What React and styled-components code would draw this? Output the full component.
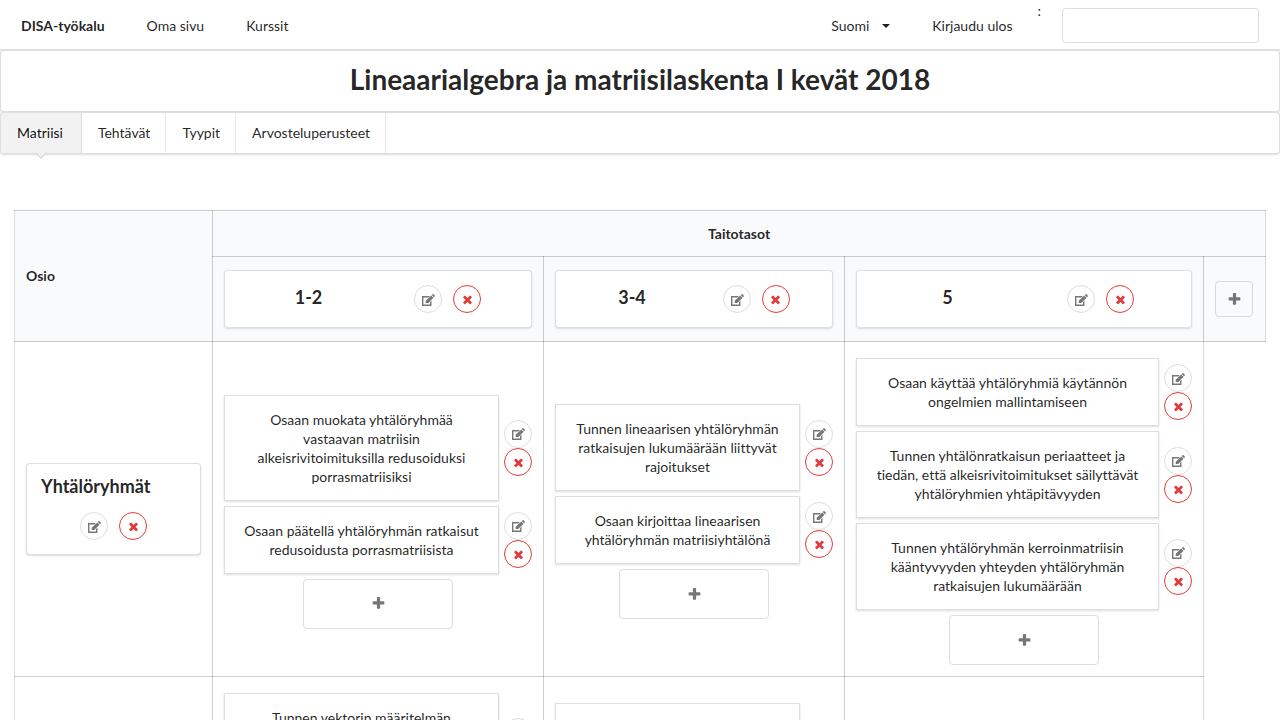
import React from 'react';
import styled, { createGlobalStyle, css } from 'styled-components';

const GlobalStyle = createGlobalStyle`
  *, *::before, *::after { box-sizing: border-box; }
  body {
    margin: 0;
    background: #fff;
    color: rgba(0, 0, 0, 0.87);
    font-family: Lato, 'Liberation Sans', sans-serif;
    font-size: 14px;
    line-height: 18px;
    font-variant-ligatures: none;
  }
  button, input, select { font: inherit; color: inherit; }
`;

const line = 'rgba(34, 36, 38, 0.15)';
const gridLine = 'rgba(34, 36, 38, 0.22)';

const raised = css`
  background: #fff;
  border: 1px solid ${line};
  box-shadow: 0 1px 2px 0 ${line};
`;

const NavBar = styled.nav`
  display: flex;
  height: 50px;
  padding: 0 21px;
  gap: 42px;
  align-items: center;
  border-bottom: 1px solid ${line};
  box-shadow: 0 1px 2px 0 ${line};
`;

const NavLink = styled.a`
  color: inherit;
  text-decoration: none;
  padding-top: 3px;
  font-weight: ${(p) => (p.$brand ? 700 : 400)};
`;

const NavRight = styled.div`
  display: flex;
  align-items: center;
  align-self: stretch;
  gap: 42px;
  margin-left: auto;
`;

const LanguagePicker = styled.label`
  display: grid;
  align-items: center;
  padding-top: 3px;
  > * { grid-area: 1 / 1; }
  svg { justify-self: end; pointer-events: none; }
`;

const LanguageSelect = styled.select`
  appearance: none;
  width: 59px;
  padding: 0;
  border: 0;
  background: transparent;
`;

const UserField = styled.label`
  display: flex;
  align-items: center;
  align-self: stretch;
  gap: 21px;
  margin-left: -17px;
`;

const UserMark = styled.span`
  align-self: flex-start;
  padding-top: 2px;
`;

const UserInput = styled.input`
  width: 197px;
  height: 35px;
  margin-top: 1px;
  padding: 0 14px;
  border: 1px solid ${line};
  border-radius: 4px;
  background: #fff;
`;

const TitlePanel = styled.header`
  ${raised}
  border-radius: 4px;
  padding: 10px 14px 14px;
  text-align: center;
`;

const CourseTitle = styled.h1`
  margin: 0;
  font-size: 28px;
  line-height: 36px;
  font-weight: 700;
`;

const TabBar = styled.nav`
  ${raised}
  display: flex;
  border-radius: 4px;
`;

const Tab = styled.a`
  position: relative;
  padding: 11px 15px 11px 16px;
  color: rgba(0, 0, 0, 0.87);
  text-decoration: none;
  border-right: 1px solid rgba(34, 36, 38, 0.1);
  ${(p) => p.$active && css`
    padding-right: 18px;
    background: #f2f2f2;
    border-radius: 3px 0 0 3px;
    color: rgba(0, 0, 0, 0.95);
    &::after {
      content: '';
      position: absolute;
      left: 50%;
      top: 100%;
      width: 8px;
      height: 8px;
      background: #f2f2f2;
      border: solid #d4d4d5;
      border-width: 0 1px 1px 0;
      transform: translate(-50%, -50%) rotate(45deg);
    }
  `}
`;

const Content = styled.main`
  padding: 56px 14px 14px;
`;

const Matrix = styled.table`
  width: 100%;
  table-layout: fixed;
  border-collapse: collapse;
`;

const cellLines = css`
  border: 1px solid ${gridLine};
  &:first-child { border-left-color: ${line}; }
  &:last-child { border-right-color: ${line}; }
`;

const HeadCell = styled.th`
  ${cellLines}
  padding: 13px 11px;
  background: #f9fafb;
  font-weight: 700;
  text-align: ${(p) => p.$align || 'center'};
`;

const SpanHeadCell = styled(HeadCell)`
  padding: 14px 11px 13px;
`;

const BodyCell = styled.td`
  ${cellLines}
  padding: 11px;
  vertical-align: middle;
`;

const LevelCard = styled.div`
  ${raised}
  display: grid;
  grid-template-columns: 1fr 1fr;
  justify-items: center;
  padding: 14px;
  border-radius: 4px;
`;

const CardTitle = styled.h3`
  margin: 0;
  font-size: 18px;
  line-height: 24px;
  font-weight: 700;
`;

const Actions = styled.div`
  display: flex;
  justify-content: center;
  flex-direction: ${(p) => (p.$stacked ? 'column' : 'row')};
  gap: ${(p) => (p.$stacked ? 0 : 11)}px;
`;

const SectionCard = styled.div`
  ${raised}
  display: flex;
  flex-direction: column;
  gap: 14px;
  padding: 10px 14px 14px;
  border-radius: 4px;
  text-align: left;
`;

const RoundButton = styled.button`
  display: flex;
  align-items: center;
  justify-content: center;
  flex: none;
  width: 28px;
  height: 28px;
  padding: 1px 0 0;
  border: 1px solid ${(p) => (p.$danger ? '#e03c3c' : line)};
  border-radius: 50%;
  background: transparent;
  color: ${(p) => (p.$danger ? '#e03c3c' : '#767676')};
  cursor: pointer;
`;

const AddButton = styled.button`
  display: flex;
  align-items: center;
  justify-content: center;
  width: ${(p) => (p.$wide ? 150 : 38)}px;
  height: ${(p) => (p.$wide ? 50 : 36)}px;
  margin: ${(p) => (p.$wide ? '5px auto 0' : '0')};
  padding: 0;
  border: 1px solid ${line};
  border-radius: 4px;
  background: transparent;
  color: #767676;
  cursor: pointer;
`;

const GoalRow = styled.div`
  display: flex;
  align-items: center;
  gap: 5px;
  margin-top: 5px;
`;

const GoalCard = styled.div`
  ${raised}
  flex: 1;
  padding: 14px;
  line-height: 19px;
  text-align: center;
`;

const Glyph = ({ size, d }) => (
  <svg width={size} height={size} viewBox="0 0 1792 1792" fill="currentColor" aria-hidden="true">
    <path d={d} />
  </svg>
);

const PLUS = 'M1600 736v192q0 40-28 68t-68 28h-416v416q0 40-28 68t-68 28h-192q-40 0-68-28t-28-68v-416h-416q-40 0-68-28t-28-68v-192q0-40 28-68t68-28h416v-416q0-40 28-68t68-28h192q40 0 68 28t28 68v416h416q40 0 68 28t28 68z';
const CROSS = 'M1490 1322q0 40-28 68l-136 136q-28 28-68 28t-68-28l-294-294-294 294q-28 28-68 28t-68-28l-136-136q-28-28-28-68t28-68l294-294-294-294q-28-28-28-68t28-68l136-136q28-28 68-28t68 28l294 294 294-294q28-28 68-28t68 28l136 136q28 28 28 68t-28 68l-294 294 294 294q28 28 28 68z';
const EDIT = 'M128 384h1000l-180 180H308v904h852v-330l180-180v690H128zM1312 320l288 288-672 672H600V992zm444 132l-92 92-288-288 92-92q28-28 68-28t68 28l152 152q28 28 28 68t-28 68z';

const EditDelete = ({ stacked }) => (
  <Actions $stacked={stacked}>
    <RoundButton type="button" aria-label="Muokkaa"><Glyph size={14} d={EDIT} /></RoundButton>
    <RoundButton type="button" aria-label="Poista" $danger><Glyph size={13} d={CROSS} /></RoundButton>
  </Actions>
);

const levels = ['1-2', '3-4', '5'];

const sections = [
  {
    name: 'Yhtälöryhmät',
    goals: [
      [
        'Osaan muokata yhtälöryhmää vastaavan matriisin alkeisrivitoimituksilla redusoiduksi porrasmatriisiksi',
        'Osaan päätellä yhtälöryhmän ratkaisut redusoidusta porrasmatriisista',
      ],
      [
        'Tunnen lineaarisen yhtälöryhmän ratkaisujen lukumäärään liittyvät rajoitukset',
        'Osaan kirjoittaa lineaarisen yhtälöryhmän matriisiyhtälönä',
      ],
      [
        'Osaan käyttää yhtälöryhmiä käytännön ongelmien mallintamiseen',
        'Tunnen yhtälönratkaisun periaatteet ja tiedän, että alkeisrivitoimitukset säilyttävät yhtälöryhmien yhtäpitävyyden',
        'Tunnen yhtälöryhmän kerroinmatriisin kääntyvyyden yhteyden yhtälöryhmän ratkaisujen lukumäärään',
      ],
    ],
  },
  {
    name: 'Vektorit',
    goals: [
      [
        'Tunnen vektorin määritelmän avaruudessa ja osaan laskea vektoreiden summan, erotuksen ja pistetulon sekä vektorin pituuden',
        'Osaan päätellä, ovatko kaksi vektoria yhdensuuntaiset tai kohtisuorassa toisiaan vastaan',
      ],
      [
        'Osaan muodostaa suoran ja tason vektorimuotoisen yhtälön sekä tulkita yhtälön ratkaisut geometrisesti avaruudessa',
        'Osaan laskea vektorin projektion toiselle vektorille',
      ],
      ['Osaan käyttää vektoreita geometristen ongelmien ratkaisemiseen'],
    ],
  },
];

export default function App() {
  return (
    <>
      <GlobalStyle />
      <NavBar>
        <NavLink href="#" $brand>DISA-työkalu</NavLink>
        <NavLink href="#oma">Oma sivu</NavLink>
        <NavLink href="#kurssit">Kurssit</NavLink>
        <NavRight>
          <LanguagePicker>
            <LanguageSelect aria-label="Kieli" defaultValue="Suomi">
              <option>Suomi</option>
              <option>English</option>
            </LanguageSelect>
            <svg width="8" height="4" viewBox="0 0 8 4" fill="currentColor" aria-hidden="true">
              <path d="M0 0h8L4 4z" />
            </svg>
          </LanguagePicker>
          <NavLink href="#ulos">Kirjaudu ulos</NavLink>
          <UserField>
            <UserMark>:</UserMark>
            <UserInput type="text" />
          </UserField>
        </NavRight>
      </NavBar>
      <TitlePanel>
        <CourseTitle>Lineaarialgebra ja matriisilaskenta I kevät 2018</CourseTitle>
      </TitlePanel>
      <TabBar>
        <Tab href="#matriisi" $active>Matriisi</Tab>
        <Tab href="#tehtavat">Tehtävät</Tab>
        <Tab href="#tyypit">Tyypit</Tab>
        <Tab href="#perusteet">Arvosteluperusteet</Tab>
      </TabBar>
      <Content>
        <Matrix>
          <colgroup>
            <col width="198" />
            <col width="331" />
            <col width="301" />
            <col width="359" />
            <col width="62" />
          </colgroup>
          <thead>
            <tr>
              <HeadCell rowSpan={2} $align="left">Osio</HeadCell>
              <SpanHeadCell colSpan={4}>Taitotasot</SpanHeadCell>
            </tr>
            <tr>
              {levels.map((level) => (
                <HeadCell key={level}>
                  <LevelCard>
                    <CardTitle>{level}</CardTitle>
                    <EditDelete />
                  </LevelCard>
                </HeadCell>
              ))}
              <HeadCell>
                <AddButton type="button" aria-label="Lisää taitotaso"><Glyph size={15} d={PLUS} /></AddButton>
              </HeadCell>
            </tr>
          </thead>
          <tbody>
            {sections.map((section) => (
              <tr key={section.name}>
                <BodyCell>
                  <SectionCard>
                    <CardTitle>{section.name}</CardTitle>
                    <EditDelete />
                  </SectionCard>
                </BodyCell>
                {section.goals.map((goals, i) => (
                  <BodyCell key={levels[i]}>
                    {goals.map((goal) => (
                      <GoalRow key={goal}>
                        <GoalCard>{goal}</GoalCard>
                        <EditDelete stacked />
                      </GoalRow>
                    ))}
                    <AddButton type="button" aria-label="Lisää tavoite" $wide><Glyph size={15} d={PLUS} /></AddButton>
                  </BodyCell>
                ))}
              </tr>
            ))}
          </tbody>
        </Matrix>
      </Content>
    </>
  );
}
